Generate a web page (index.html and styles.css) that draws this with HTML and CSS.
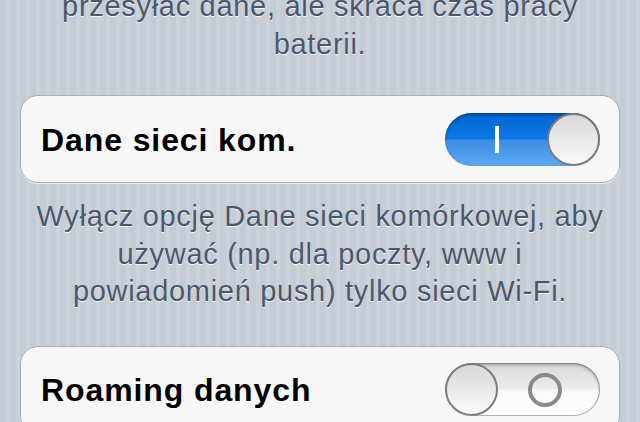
FILE: index.html
```html
<!DOCTYPE html>
<html lang="pl">

<head>
  <meta charset="UTF-8" />
  <meta name="viewport" content="width=device-width, initial-scale=1.0" />
  <title>Sieć komórkowa</title>
  <link rel="stylesheet" href="styles.css">
</head>

<body>
  <div class="settings">
    <p class="note note-top">przesyłać dane, ale skraca czas pracy<br>baterii.</p>

    <div class="cell">
      <span class="cell-label">Dane sieci kom.</span>
      <div class="switch on">
        <span class="switch-mark"></span>
        <span class="switch-knob"></span>
      </div>
    </div>

    <p class="note">Wyłącz opcję Dane sieci komórkowej, aby<br>używać (np. dla poczty, www i<br>powiadomień push) tylko sieci Wi-Fi.</p>

    <div class="cell">
      <span class="cell-label">Roaming danych</span>
      <div class="switch off">
        <span class="switch-knob"></span>
        <span class="switch-mark"></span>
      </div>
    </div>
  </div>
</body>

</html>
```

FILE: styles.css
```css
* {
  margin: 0;
  padding: 0;
  box-sizing: border-box;
}

body {
  width: 640px;
  height: 422px;
  overflow: hidden;
  font-family: "Liberation Sans", Arial, sans-serif;
  background: repeating-linear-gradient(90deg, #c5ccd4 0, #c5ccd4 6px, #cbd2d9 6px, #cbd2d9 10px);
}

.settings {
  padding: 0 20px;
}

.note {
  font-size: 29px;
  line-height: 37.5px;
  letter-spacing: 0.7px;
  color: #4c566c;
  text-align: center;
  text-shadow: 0 1px 0 rgba(255, 255, 255, 0.8);
  padding: 15px 0 35px;
}

.note-top {
  margin-top: -12px;
  padding-top: 0;
  padding-bottom: 32px;
}

.cell {
  height: 88px;
  display: flex;
  align-items: center;
  justify-content: space-between;
  padding: 0 19px 0 20px;
  background: #f7f7f7;
  border: 1px solid #a8abaf;
  border-radius: 18px;
  box-shadow: 0 1px 0 rgba(255, 255, 255, 0.7);
}

.cell-label {
  font-size: 32px;
  font-weight: bold;
  letter-spacing: 0.9px;
  color: #000;
  padding-top: 2px;
}

.switch {
  position: relative;
  width: 155px;
  height: 53px;
  border-radius: 27px;
  display: flex;
  align-items: center;
  overflow: hidden;
}

.switch.on {
  background: linear-gradient(#0565d0 0, #0a78e6 48%, #3d8fe4 52%, #5ea7ee 100%);
  box-shadow: inset 0 2px 3px rgba(0, 0, 0, 0.35);
}

.switch.off {
  background: linear-gradient(#d8d8d8 0, #ececec 48%, #fafafa 52%, #ffffff 100%);
  box-shadow: inset 0 2px 3px rgba(0, 0, 0, 0.3), inset 0 0 0 1px #b5b5b5;
}

.switch-knob {
  width: 53px;
  height: 53px;
  border-radius: 50%;
  background: linear-gradient(#d7d7d7, #fbfbfb);
  border: 2px solid #7d7d7d;
  flex-shrink: 0;
}

.switch.on .switch-knob {
  margin-left: auto;
}

.switch-mark {
  flex: 1;
  display: flex;
  justify-content: center;
}

.switch.on .switch-mark::before {
  content: "";
  width: 4px;
  height: 27px;
  margin-left: 2px;
  background: #fff;
}

.switch.off .switch-mark::before {
  content: "";
  width: 26px;
  height: 26px;
  border: 4px solid #8a8a8a;
  border-radius: 50%;
  margin-right: 8px;
}
```
